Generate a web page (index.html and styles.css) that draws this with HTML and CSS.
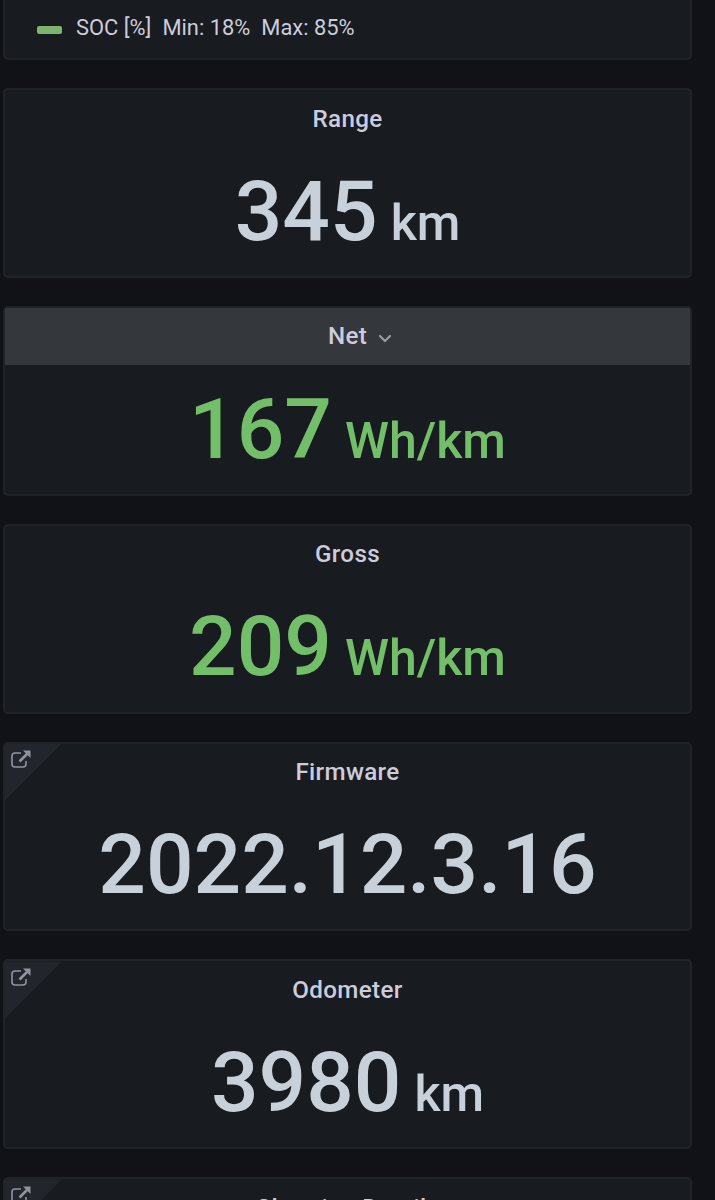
FILE: index.html
```html
<!DOCTYPE html>
<html lang="en">
<head>
    <meta charset="UTF-8">
    <meta name="viewport" content="width=device-width, initial-scale=1.0">
    <title>Overview</title>
    <link rel="stylesheet" href="styles.css">
</head>
<body>
    <main class="dashboard">
        <section class="panel panel-legend">
            <div class="legend">
                <span class="legend-color"></span>
                <span>SOC [%]</span>
                <span>Min: 18%</span>
                <span>Max: 85%</span>
            </div>
        </section>

        <section class="panel">
            <h2 class="panel-title">Range</h2>
            <div class="stat">345<span class="unit">km</span></div>
        </section>

        <section class="panel">
            <h2 class="panel-title active">Net
                <svg class="chevron" viewBox="0 0 14 9"><path d="M2 2l5 5 5-5"/></svg>
            </h2>
            <div class="stat green">167<span class="unit">Wh/km</span></div>
        </section>

        <section class="panel">
            <h2 class="panel-title">Gross</h2>
            <div class="stat green">209<span class="unit">Wh/km</span></div>
        </section>

        <section class="panel">
            <a class="corner" href="#">
                <svg viewBox="0 0 20 18"><path class="box" d="M10 3H4Q1 3 1 6v8q0 3 3 3h8q3 0 3-3v-3"/><path class="arrow" d="M8.500 11.500L16 4"/><path class="head" d="M12 .5h7.500V8z"/></svg>
            </a>
            <h2 class="panel-title">Firmware</h2>
            <div class="stat">2022.12.3.16</div>
        </section>

        <section class="panel">
            <a class="corner" href="#">
                <svg viewBox="0 0 20 18"><path class="box" d="M10 3H4Q1 3 1 6v8q0 3 3 3h8q3 0 3-3v-3"/><path class="arrow" d="M8.500 11.500L16 4"/><path class="head" d="M12 .5h7.500V8z"/></svg>
            </a>
            <h2 class="panel-title">Odometer</h2>
            <div class="stat">3980<span class="unit">km</span></div>
        </section>

        <section class="panel">
            <a class="corner" href="#">
                <svg viewBox="0 0 20 18"><path class="box" d="M10 3H4Q1 3 1 6v8q0 3 3 3h8q3 0 3-3v-3"/><path class="arrow" d="M8.500 11.500L16 4"/><path class="head" d="M12 .5h7.500V8z"/></svg>
            </a>
            <h2 class="panel-title">Charging Details</h2>
        </section>
    </main>
</body>
</html>
```

FILE: styles.css
```css
* {
    box-sizing: border-box;
}

body {
    margin: 0;
    background-color: #111217;
    color: #ccccdc;
    font-family: Roboto, sans-serif;
}

.dashboard {
    display: flex;
    flex-direction: column;
    gap: 28px;
    height: 1200px;
    padding: 0 23px 0 3px;
    overflow: hidden;
}

.panel {
    position: relative;
    flex: none;
    height: 189.85px;
    background-color: #181b1f;
    border: 2px solid #202327;
    border-radius: 5px;
}

.panel-legend {
    height: 60px;
    border-top: none;
    border-radius: 0 0 5px 5px;
}

.legend {
    display: flex;
    align-items: center;
    gap: 11px;
    padding: 12px 0 0 32px;
    font-size: 21.9px;
    line-height: 32px;
}

.legend-color {
    width: 25px;
    height: 8px;
    margin: 4px 3px 0 0;
    background-color: #7eb26d;
    border-radius: 2px;
}

.panel-title {
    display: flex;
    justify-content: center;
    align-items: center;
    height: 57px;
    margin: 0;
    font-size: 24.2px;
    font-weight: 500;
    letter-spacing: 0.35px;
}

.panel-title.active {
    padding-left: 25px;
    background-color: #34373c;
}

.chevron {
    width: 14px;
    height: 9px;
    margin: 4px 0 0 11px;
    fill: none;
    stroke: #9a9ba6;
    stroke-width: 2.2;
    stroke-linecap: round;
    stroke-linejoin: round;
}

.stat {
    display: flex;
    justify-content: center;
    align-items: baseline;
    padding-top: 0.7px;
    color: #c8d0da;
    font-size: 83.8px;
    font-weight: 500;
    line-height: 126px;
}

.green {
    color: #73bf69;
}

.unit {
    margin-left: 13px;
    font-size: 50px;
}

.corner {
    position: absolute;
    top: 0;
    left: 0;
    width: 57px;
    height: 57px;
    background-color: #22252b;
    clip-path: polygon(0 0, 100% 0, 0 100%);
}

.corner svg {
    display: block;
    width: 20px;
    height: 18px;
    margin: 6.500px 0 0 6px;
}

.box,
.arrow {
    fill: none;
    stroke: #9293a0;
    stroke-width: 1.6;
}

.arrow {
    stroke-width: 2.6;
}

.head {
    fill: #9293a0;
}
```
